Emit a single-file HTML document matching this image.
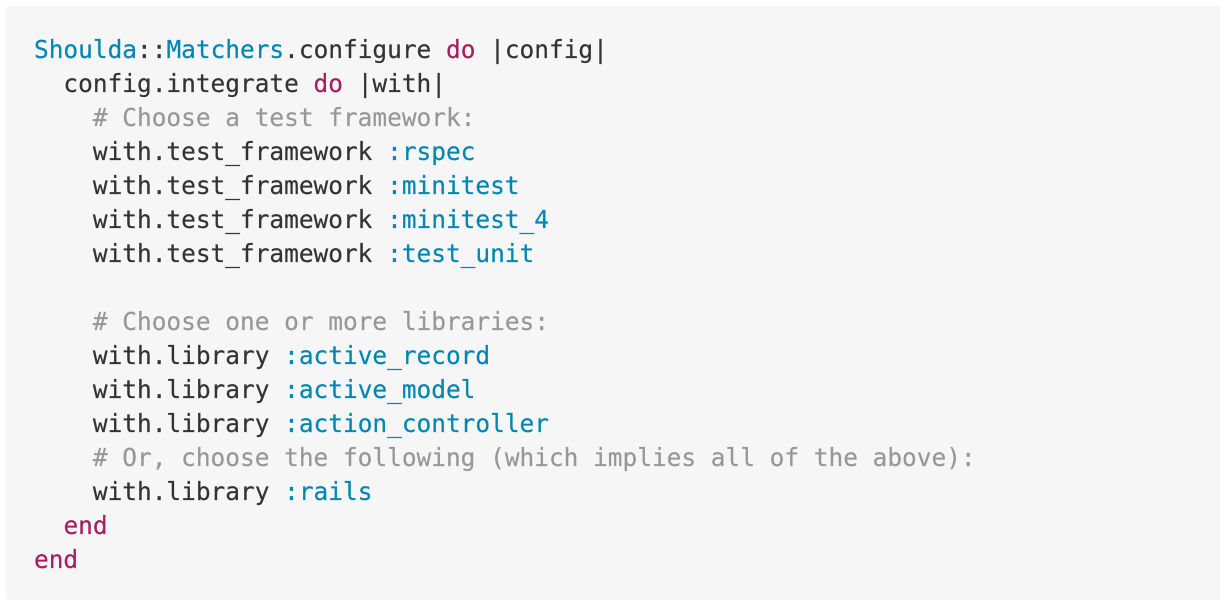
<!DOCTYPE html>
<html><head><style>
html,body{margin:0;padding:0;background:#fff;width:1226px;height:606px;overflow:hidden}
.box{position:absolute;left:6px;top:6px;width:1214px;height:594px;background:#f6f6f6;border-radius:3px}
pre{position:absolute;left:34px;top:33px;margin:0;font-family:"DejaVu Sans Mono","Liberation Mono",monospace;font-size:24.45px;line-height:34px;color:#333;-webkit-text-stroke:0.2px currentColor}
.b{color:#0086b3}.k{color:#a71d5d}.c{color:#969896}
</style></head><body><div class="box"></div>
<pre><span class="b">Shoulda</span>::<span class="b">Matchers</span>.configure <span class="k">do</span> |config|
  config.integrate <span class="k">do</span> |with|
    <span class="c"># Choose a test framework:</span>
    with.test_framework <span class="b">:rspec</span>
    with.test_framework <span class="b">:minitest</span>
    with.test_framework <span class="b">:minitest_4</span>
    with.test_framework <span class="b">:test_unit</span>

    <span class="c"># Choose one or more libraries:</span>
    with.library <span class="b">:active_record</span>
    with.library <span class="b">:active_model</span>
    with.library <span class="b">:action_controller</span>
    <span class="c"># Or, choose the following (which implies all of the above):</span>
    with.library <span class="b">:rails</span>
  <span class="k">end</span>
<span class="k">end</span></pre>
</body></html>
